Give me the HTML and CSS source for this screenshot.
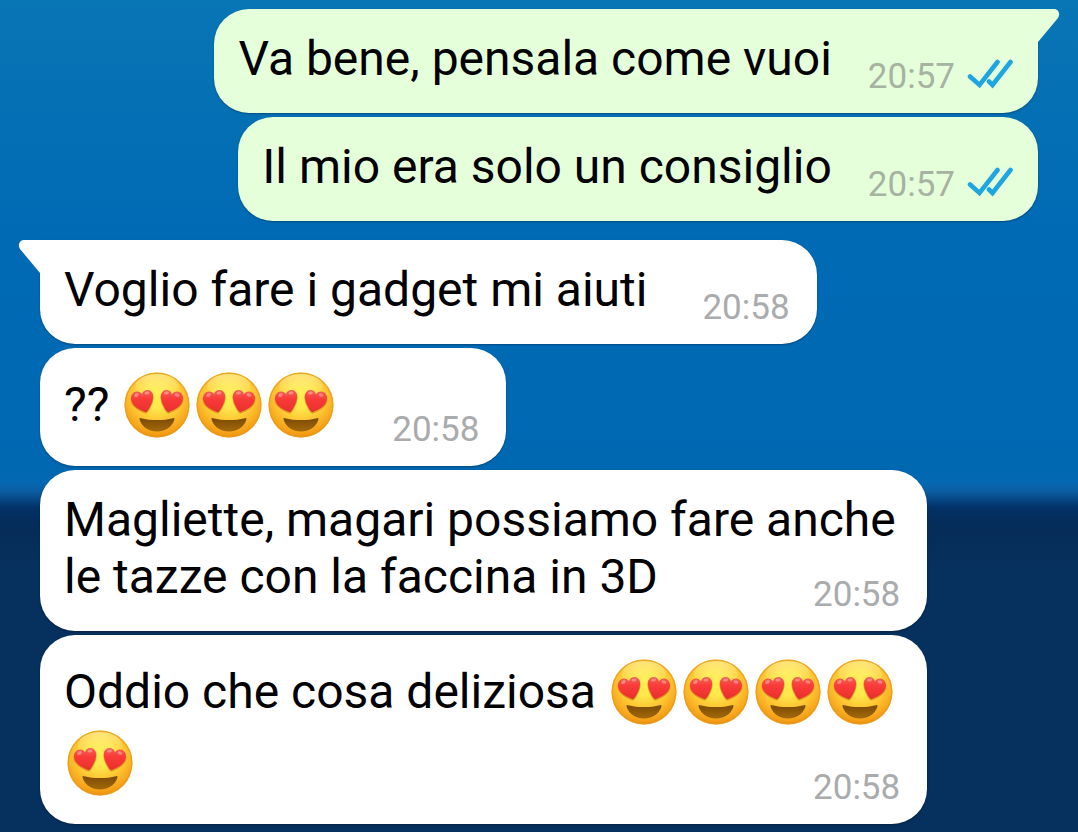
FILE: index.html
```
<!DOCTYPE html>
<html lang="it">
<head>
    <meta charset="UTF-8">
    <meta name="viewport" content="width=device-width, initial-scale=1.0">
    <title>Chat</title>
    <link rel="stylesheet" href="styles.css">
</head>
<body>

    <!-- Shared icons -->
    <svg class="icon-defs" aria-hidden="true">
        <defs>
            <radialGradient id="face-fill" cx="50%" cy="36%" r="66%">
                <stop offset="0" stop-color="#fff04e"/>
                <stop offset="0.3" stop-color="#ffe64c"/>
                <stop offset="0.62" stop-color="#fdc22f"/>
                <stop offset="0.88" stop-color="#f49f17"/>
                <stop offset="1" stop-color="#e78a0e"/>
            </radialGradient>
            <linearGradient id="shine-fill" x1="0" y1="0" x2="0" y2="1">
                <stop offset="0" stop-color="#fff6c0" stop-opacity="0.5"/>
                <stop offset="1" stop-color="#fff27a" stop-opacity="0"/>
            </linearGradient>
            <linearGradient id="heart-fill" x1="0" y1="0" x2="0" y2="1">
                <stop offset="0" stop-color="#f4625a"/>
                <stop offset="0.4" stop-color="#f93b38"/>
                <stop offset="1" stop-color="#e8302e"/>
            </linearGradient>
            <linearGradient id="mouth-fill" x1="0" y1="0" x2="0" y2="1">
                <stop offset="0" stop-color="#7c4a04"/>
                <stop offset="1" stop-color="#a3690a"/>
            </linearGradient>
            <path id="heart" d="M20.500 39.800C14.500 37.200 8.300 33.900 7.200 28C6.300 23.200 9.200 19.700 13 19.500C15.400 19.400 17.400 20.800 18.200 22.600C18.400 19.800 20.400 18 23 17.900C27.200 17.700 29.400 21.100 29.100 25.400C28.700 30.500 26 35.300 23.400 39C22.600 40.200 21.700 40.400 20.500 39.800Z"/>
            <symbol id="heart-eyes" viewBox="0 0 66 66">
                <circle cx="33" cy="33" r="32.5" fill="url(#face-fill)"/>
                <circle cx="33" cy="33" r="31.8" fill="none" stroke="#e99a1c" stroke-width="1.4" opacity="0.7"/>
                <ellipse cx="33" cy="15" rx="22" ry="13" fill="url(#shine-fill)"/>
                <g fill="#c9760c" stroke="#c9760c" stroke-width="1" opacity="0.55">
                    <use href="#heart" transform="translate(0 1)"/>
                    <use href="#heart" transform="translate(66 1) scale(-1 1)"/>
                </g>
                <g fill="url(#heart-fill)">
                    <use href="#heart"/>
                    <use href="#heart" transform="translate(66 0) scale(-1 1)"/>
                </g>
                <g fill="#ffb0a2" opacity="0.6">
                    <ellipse cx="12.500" cy="23" rx="2.500" ry="1.700" transform="rotate(-35 12.500 23)"/>
                    <ellipse cx="23" cy="21" rx="2.500" ry="1.500" transform="rotate(-10 23 21)"/>
                    <ellipse cx="42.500" cy="21" rx="2.500" ry="1.500" transform="rotate(-10 42.500 21)"/>
                    <ellipse cx="53" cy="23" rx="2.500" ry="1.600" transform="rotate(20 53 23)"/>
                </g>
                <path d="M17 46.200C22 47.500 27 48 33 48C39 48 44 47.500 49 46.200C50.400 45.800 50.800 46.600 50.300 48C47.600 55.500 41 59.400 33 59.400C25 59.400 18.400 55.500 15.700 48C15.200 46.600 15.600 45.800 17 46.200Z" fill="url(#mouth-fill)"/>
            </symbol>
            <symbol id="read-checks" viewBox="0 0 46 32">
                <path d="M3 18.500L12.500 27L30.500 4M22 23.500L25.500 27L43.500 4" fill="none" stroke="#1fa5df" stroke-width="4.600" stroke-linecap="round" stroke-linejoin="miter"/>
            </symbol>
            <symbol id="tail" viewBox="0 0 22 34">
                <path d="M0 0H16C20.500 0 22.500 5 20 9L0 33Z" fill="currentColor"/>
            </symbol>
        </defs>
    </svg>

    <main class="chat">
        <!-- Sent messages -->
        <section class="group sent">
            <article class="bubble first">
                <svg class="tail" aria-hidden="true"><use href="#tail"/></svg>
                <p class="text">Va bene, pensala come vuoi<span class="meta"><time>20:57</time><svg class="checks" role="img" aria-label="Letto"><use href="#read-checks"/></svg></span></p>
            </article>
            <article class="bubble">
                <p class="text">Il mio era solo un consiglio<span class="meta"><time>20:57</time><svg class="checks" role="img" aria-label="Letto"><use href="#read-checks"/></svg></span></p>
            </article>
        </section>

        <!-- Received messages -->
        <section class="group received">
            <article class="bubble first">
                <svg class="tail" aria-hidden="true"><use href="#tail"/></svg>
                <p class="text">Voglio fare i gadget mi aiuti<span class="meta"><time>20:58</time></span></p>
            </article>
            <article class="bubble">
                <p class="text with-emoji">?? <svg class="emoji"><use href="#heart-eyes"/></svg><svg class="emoji"><use href="#heart-eyes"/></svg><svg class="emoji"><use href="#heart-eyes"/></svg><span class="meta"><time>20:58</time></span></p>
            </article>
            <article class="bubble">
                <p class="text">Magliette, magari possiamo fare anche le tazze con la faccina in 3D<span class="meta"><time>20:58</time></span></p>
            </article>
            <article class="bubble">
                <p class="text with-emoji">Oddio che cosa deliziosa <svg class="emoji"><use href="#heart-eyes"/></svg><svg class="emoji"><use href="#heart-eyes"/></svg><svg class="emoji"><use href="#heart-eyes"/></svg><svg class="emoji"><use href="#heart-eyes"/></svg><svg class="emoji"><use href="#heart-eyes"/></svg><span class="meta"><time>20:58</time></span></p>
            </article>
        </section>
    </main>

</body>
</html>
```
FILE: styles.css
```
* {
    box-sizing: border-box;
}
body {
    font-family: Roboto, "Noto Sans", sans-serif;
    margin: 0;
    min-height: 100vh;
    background: linear-gradient(#0875b5 0%, #0470b4 14%, #006ab5 28%, #0069b4 50%, #0067b0 57%, #0568b2 58%, #0c5ea2 59%, #023268 61%, #062c59 63%, #06305d 68%, #06305d 100%);
}
.icon-defs {
    position: absolute;
    width: 0;
    height: 0;
}
.chat {
    display: flex;
    flex-direction: column;
    gap: 19px;
    padding: 9px 40px 8px;
}
.group {
    display: flex;
    flex-direction: column;
    gap: 4px;
}
.sent {
    align-items: flex-end;
    color: #e5ffdb;
}
.received {
    align-items: flex-start;
    color: #ffffff;
}
.bubble {
    position: relative;
    max-width: 88.9%;
    border-radius: 35px;
    background-color: currentColor;
    box-shadow: 0 1px 2px rgba(0, 0, 0, 0.3);
}
.sent .first {
    border-top-right-radius: 0;
}
.received .first {
    border-top-left-radius: 0;
}
.text {
    margin: 0;
    padding: 21px 25px 26px 24px;
    font-size: 48px;
    line-height: 57px;
    color: #000000;
}
.with-emoji {
    line-height: 71px;
}
/* floats next to the last line and hangs a little below it */
.meta {
    float: right;
    display: flex;
    align-items: center;
    gap: 12px;
    margin: 26px 2px -11px 55px;
    font-size: 35px;
    line-height: 42px;
    color: #a9abad;
}
.with-emoji .meta {
    margin-top: 40px;
}
.sent .meta {
    margin-left: 36px;
    margin-right: 0;
    color: #a6b3a1;
}
.checks {
    width: 46px;
    height: 32px;
    margin-bottom: 6px;
}
.emoji {
    width: 66px;
    height: 66px;
    margin: 0 3px;
    vertical-align: -17px;
}
.tail {
    position: absolute;
    top: 0;
    width: 22px;
    height: 34px;
}
.sent .tail {
    left: 100%;
}
.received .tail {
    right: 100%;
    transform: scaleX(-1);
}
```
